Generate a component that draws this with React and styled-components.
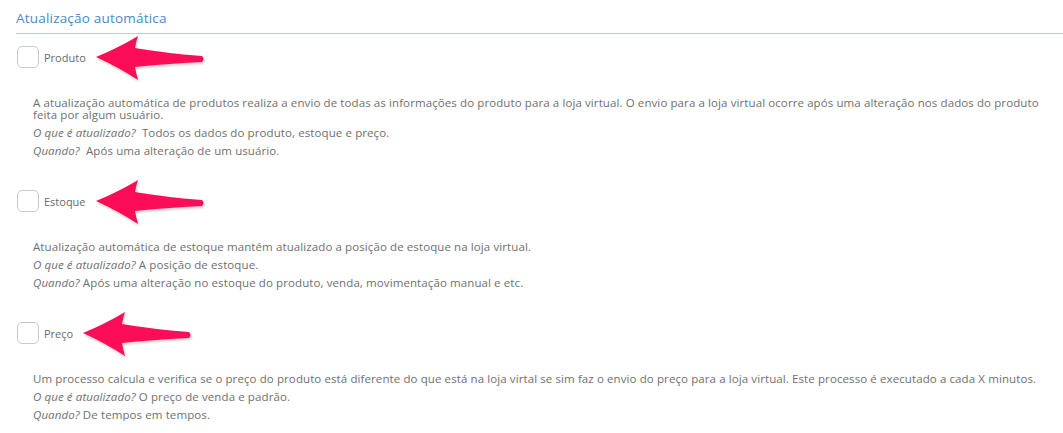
import React from 'react';
import styled, { createGlobalStyle } from 'styled-components';

const GlobalStyle = createGlobalStyle`
  html, body {
    margin: 0;
    padding: 0;
    background: #ffffff;
  }
  body {
    font-family: 'Open Sans', 'Liberation Sans', sans-serif;
  }
`;

const Page = styled.div`
  padding: 10px 0 0 16px;
  width: 1047px;
`;

const Legend = styled.div`
  font-size: 13.5px;
  line-height: 16px;
  letter-spacing: 0.2px;
  color: #4a8ac8;
  padding-bottom: 7px;
  border-bottom: 1px solid #a9d2f0;
`;

const Option = styled.section`
  margin-top: ${(props) => props.$first ? '12px' : '33px'};
`;

const Row = styled.label`
  display: flex;
  align-items: center;
  height: 22px;
  padding-left: 1px;
`;

const Box = styled.span`
  width: 20px;
  height: 20px;
  border: 1px solid #c9c9c9;
  border-radius: 5px;
  background: #fff;
  flex: none;
`;

const Label = styled.span`
  font-size: 11px;
  color: #6a6a6a;
  margin-left: 5px;
`;

const Arrow = styled.svg`
  flex: none;
  margin: -13px 0 -13px 8px;
  filter: drop-shadow(1px 2px 1px rgba(0, 0, 0, 0.18));
`;

const Description = styled.div`
  margin-top: 29px;
  padding: 0 16px 0 17px;
  font-size: 11.5px;
  letter-spacing: 0.1px;
  line-height: 12px;
  color: #6f6f6f;
`;

const Para = styled.p`
  margin: 0 0 6px;
  &:last-child {
    margin-bottom: 0;
  }
`;

const Em = styled.em`
  font-style: italic;
`;

function PointerArrow() {
  return (
    <Arrow width="112" height="48" viewBox="0 0 112 48">
      <path
        d="M2 24 Q24 15 44 3 Q42 9 41 15 Q70 20 108 23 Q111 26 108 29 Q70 31 41 34 Q42 40 44 47 Q24 34 2 24 Z"
        fill="#fb0d58"
      />
    </Arrow>
  );
}

const options = [
  {
    label: 'Produto',
    text: 'A atualização automática de produtos realiza a envio de todas as informações do produto para a loja virtual. O envio para a loja virtual ocorre após uma alteração nos dados do produto feita por algum usuário.',
    what: '\u00a0 Todos os dados do produto, estoque e preço.',
    when: '\u00a0 Após uma alteração de um usuário.',
  },
  {
    label: 'Estoque',
    text: 'Atualização automática de estoque mantém atualizado a posição de estoque na loja virtual.',
    what: ' A posição de estoque.',
    when: ' Após uma alteração no estoque do produto, venda, movimentação manual e etc.',
  },
  {
    label: 'Preço',
    text: 'Um processo calcula e verifica se o preço do produto está diferente do que está na loja virtal se sim faz o envio do preço para a loja virtual. Este processo é executado a cada X minutos.',
    what: ' O preço de venda e padrão.',
    when: ' De tempos em tempos.',
  },
];

export default function App() {
  return (
    <>
      <GlobalStyle />
      <Page>
        <Legend>Atualização automática</Legend>
        {options.map((opt, i) => (
          <Option key={opt.label} $first={i === 0}>
            <Row>
              <Box />
              <Label>{opt.label}</Label>
              <PointerArrow />
            </Row>
            <Description>
              <Para>{opt.text}</Para>
              <Para>
                <Em>O que é atualizado?</Em>
                {opt.what}
              </Para>
              <Para>
                <Em>Quando?</Em>
                {opt.when}
              </Para>
            </Description>
          </Option>
        ))}
      </Page>
    </>
  );
}
